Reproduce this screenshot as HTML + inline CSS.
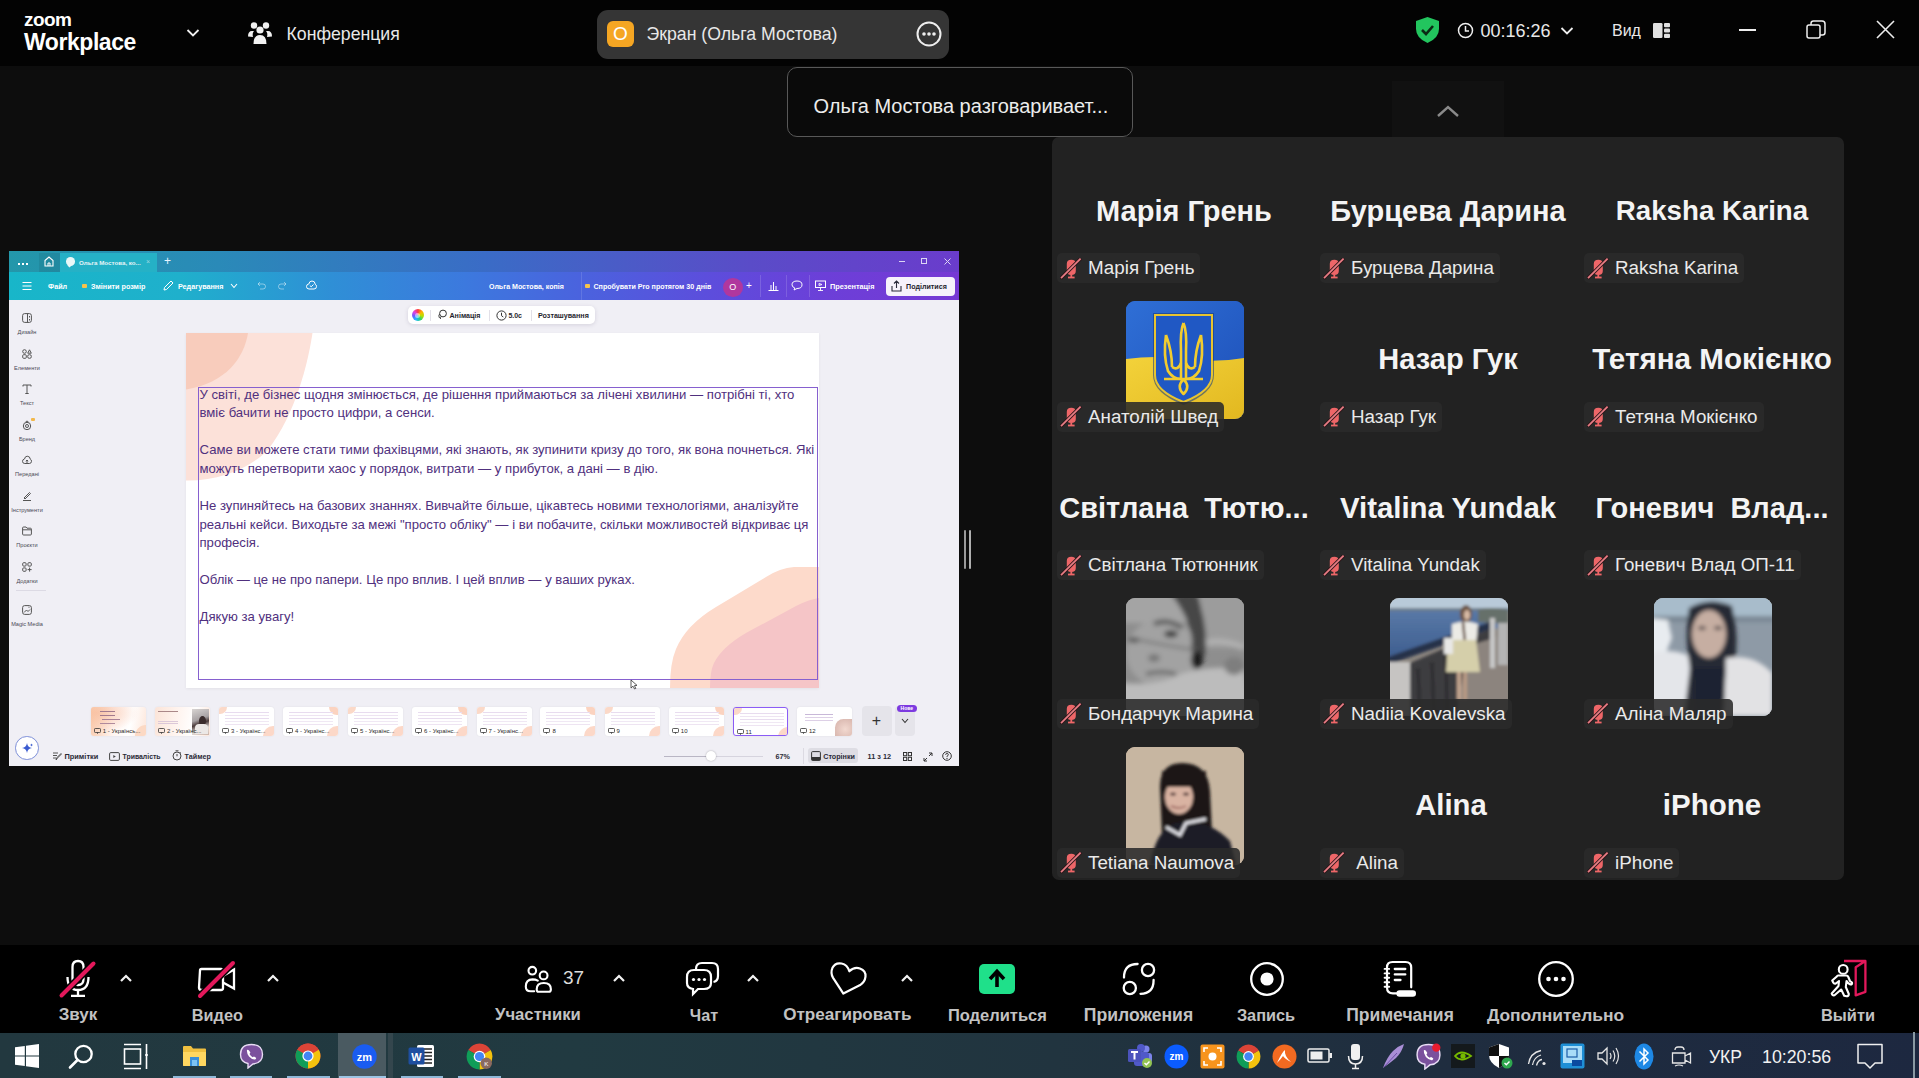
<!DOCTYPE html>
<html><head><meta charset="utf-8">
<style>
*{margin:0;padding:0;box-sizing:border-box}
html,body{width:1919px;height:1078px;overflow:hidden;background:#0d0d0d;font-family:"Liberation Sans",sans-serif;position:relative}
.a{position:absolute}
#top{left:0;top:0;width:1919px;height:66px;background:#030303}
.wt{color:#e8e8e8}
#main{left:0;top:66px;width:1919px;height:879px;background:#0d0d0d}
#panel{left:1052px;top:137px;width:792px;height:743px;background:#222;border-radius:7px}
#tb{left:0;top:945px;width:1919px;height:88px;background:#000}
#task{left:0;top:1033px;width:1919px;height:45px;background:linear-gradient(90deg,#22383f 0%,#213a41 30%,#21343f 55%,#1f2d3f 75%,#1d2840 100%)}
.lbl{color:#c2c2c2;font-weight:bold;font-size:17px;line-height:20px;white-space:nowrap;text-align:center}
.big{color:#f4f4f4;font-weight:bold;font-size:29px;white-space:nowrap;text-align:center;width:264px}
.tag{height:30px;background:rgba(42,42,42,0.88);border-radius:5px;color:#eaeaea;font-size:18.8px;line-height:29px;padding-left:31px;padding-right:6px;white-space:nowrap}
.tag svg{position:absolute;left:3px;top:4px}

.av{width:118px;height:118px;border-radius:9px;overflow:hidden}
.av-flag{background:linear-gradient(180deg,#2a62c9 0%,#1f56c0 52%,#f0cb2a 52%,#e9c22a 100%)}
.av-p1{background:radial-gradient(ellipse at 45% 60%,#c8c8c8 0%,#9a9a9a 45%,#5a5a5a 100%)}
.av-p2{background:linear-gradient(180deg,#b6c6d6 0%,#9fb4c8 12%,#2f4d74 14%,#3b5c86 45%,#6a7990 70%,#9a8f86 100%)}
.av-p3{background:radial-gradient(ellipse at 50% 40%,#c9b7ac 0%,#e6e6e8 60%,#f4f4f6 100%)}
.av-p4{background:radial-gradient(ellipse at 50% 55%,#3a2c2a 0%,#2a2222 30%,#c8b29c 55%,#d7c2ac 100%)}

.cvt{color:#fff;font-weight:bold;font-size:7.2px;line-height:10px;white-space:nowrap}
.sb{left:0;width:36px;text-align:center;font-size:5.6px;color:#4a4a56;line-height:8px;white-space:nowrap}
.sb svg{display:block;margin:0 auto 5px auto}
</style></head><body>
<div class="a" id="top"></div>
<div class="a" id="main"></div>
<div class="a" id="panel"></div>

<!-- TOP BAR -->
<div class="a wt" style="left:24px;top:10.4px;font-size:19px;font-weight:bold;letter-spacing:-0.6px;line-height:20px;color:#fff">zoom</div>
<div class="a wt" style="left:24px;top:28.9px;font-size:23px;font-weight:bold;line-height:26px;color:#fff;letter-spacing:-0.45px">Workplace</div>
<svg class="a" style="left:186px;top:28px" width="14" height="10" viewBox="0 0 14 10"><path d="M1.5 2 L7 7.5 L12.5 2" stroke="#f0f0f0" stroke-width="1.8" fill="none"/></svg>
<svg class="a" style="left:247px;top:21px" width="26" height="24" viewBox="0 0 26 24"><circle cx="7" cy="4.5" r="3.2" fill="#f2f2f2"/><circle cx="19" cy="4.5" r="3.2" fill="#f2f2f2"/><circle cx="13" cy="9" r="3.6" fill="#f2f2f2"/><path d="M1 15.5 Q1 10 5 10 L7 10 Q5 12 6 16 Z" fill="#f2f2f2"/><path d="M25 15.5 Q25 10 21 10 L19 10 Q21 12 20 16 Z" fill="#f2f2f2"/><path d="M6.5 23 Q6.5 14 13 14 Q19.5 14 19.5 23 Z" fill="#f2f2f2"/></svg>
<div class="a wt" style="left:286.5px;top:24px;font-size:17.7px;line-height:20px">Конференция</div>

<div class="a" style="left:597px;top:10px;width:352px;height:49px;background:#353535;border-radius:11px"></div>
<div class="a" style="left:607px;top:21px;width:27px;height:26px;background:#f5a623;border-radius:6px;color:#fff;font-size:19px;line-height:26px;text-align:center">O</div>
<div class="a wt" style="left:646.5px;top:24px;font-size:17.7px;line-height:20px">Экран (Ольга Мостова)</div>
<svg class="a" style="left:915px;top:20px" width="28" height="28" viewBox="0 0 28 28"><circle cx="14" cy="14" r="11.5" stroke="#eee" stroke-width="2" fill="none"/><circle cx="9" cy="14" r="1.8" fill="#eee"/><circle cx="14" cy="14" r="1.8" fill="#eee"/><circle cx="19" cy="14" r="1.8" fill="#eee"/></svg>

<div class="a" style="left:787px;top:67px;width:346px;height:70px;background:#0a0a0a;border:1.5px solid #585858;border-radius:10px"></div>
<div class="a wt" style="left:813.5px;top:95px;font-size:20px;line-height:22px;color:#ececec">Ольга Мостова разговаривает...</div>

<svg class="a" style="left:1414px;top:16px" width="27" height="28" viewBox="0 0 27 28"><path d="M13.5 1 L25 5 L25 13 Q25 22 13.5 27 Q2 22 2 13 L2 5 Z" fill="#22c55e"/><path d="M8 14 L12 18 L19 10" stroke="#0b2a14" stroke-width="2.6" fill="none"/></svg>
<svg class="a" style="left:1457px;top:22px" width="17" height="17" viewBox="0 0 17 17"><circle cx="8.5" cy="8.5" r="7" stroke="#eee" stroke-width="1.5" fill="none"/><path d="M8.5 4 L8.5 9 L12 9" stroke="#eee" stroke-width="1.5" fill="none"/></svg>
<div class="a wt" style="left:1480.5px;top:21px;font-size:18px;line-height:20px">00:16:26</div>
<svg class="a" style="left:1560px;top:26px" width="14" height="10" viewBox="0 0 14 10"><path d="M1.5 2 L7 7.5 L12.5 2" stroke="#eee" stroke-width="1.8" fill="none"/></svg>
<div class="a wt" style="left:1612px;top:21px;font-size:16px;line-height:20px">Вид</div>
<svg class="a" style="left:1653px;top:22.5px" width="17" height="15" viewBox="0 0 17 15"><rect x="0" y="0" width="9.5" height="15" rx="1.3" fill="#e0e0e0"/><rect x="11" y="0" width="6" height="4.3" rx="1" fill="#e0e0e0"/><rect x="11" y="5.4" width="6" height="4.2" rx="1" fill="#e0e0e0"/><rect x="11" y="10.7" width="6" height="4.3" rx="1" fill="#e0e0e0"/></svg>
<div class="a" style="left:1739px;top:29px;width:17px;height:1.5px;background:#eee"></div>
<svg class="a" style="left:1806px;top:20px" width="20" height="20" viewBox="0 0 20 20"><rect x="1" y="5" width="13" height="13" rx="2" stroke="#eee" stroke-width="1.5" fill="none"/><path d="M5 5 L5 3.5 Q5 1 7.5 1 L16 1 Q19 1 19 4 L19 12.5 Q19 15 16.5 15 L14 15" stroke="#eee" stroke-width="1.5" fill="none"/></svg>
<svg class="a" style="left:1876px;top:20px" width="19" height="19" viewBox="0 0 19 19"><path d="M1 1 L18 18 M18 1 L1 18" stroke="#eee" stroke-width="1.6"/></svg>
<div class="a" style="left:1392px;top:81px;width:112px;height:56px;background:#111111"></div>
<svg class="a" style="left:1436px;top:103px" width="24" height="16" viewBox="0 0 24 16"><path d="M2 13 L12 4 L22 13" stroke="#8a8a8a" stroke-width="2.4" fill="none"/></svg>

<div class="a" id="tb"></div>
<div class="a" id="task"></div>
<div class="a" style="left:964px;top:530px;width:2px;height:39px;background:#9a9a9a;border-radius:1px"></div><div class="a" style="left:968.6px;top:530px;width:2px;height:39px;background:#b0b0b0;border-radius:1px"></div>
<!-- CANVA -->
<div class="a" id="cv" style="left:9px;top:251px;width:950px;height:515px;background:#f0eff5;overflow:hidden">
 <div class="a" style="left:0;top:0;width:950px;height:21px;background:linear-gradient(90deg,#2397aa 0%,#2a8ab8 22%,#3a6cc6 50%,#5a4cc8 78%,#6a3ccc 100%)"></div>
 
 <div class="a" style="left:30px;top:2px;width:21px;height:19px;background:rgba(0,0,0,0.07)"></div>
 <div class="a" style="left:51px;top:2px;width:97px;height:19px;background:#25b1c6"></div>
 <div class="a" style="left:9px;top:11.5px;width:2px;height:2px;background:#fff;box-shadow:4px 0 #fff,8px 0 #fff"></div>
 <svg class="a" style="left:35px;top:5px" width="10" height="11" viewBox="0 0 10 11"><path d="M1 4.5 L5 1 L9 4.5 L9 10 L1 10 Z" stroke="#fff" stroke-width="1.1" fill="none"/><path d="M4 10 L4 7 L6 7 L6 10" stroke="#fff" stroke-width="1" fill="none"/></svg>
 <div class="a" style="left:57px;top:6px;width:9px;height:8.5px;border-radius:50%;background:#eaf8f8"></div><div class="a" style="left:59px;top:13px;width:3px;height:3px;background:#eaf8f8;transform:rotate(45deg)"></div>
 <div class="a" style="left:70px;top:6px;font-size:6.2px;font-weight:bold;color:#e6f4f7;line-height:11px;white-space:nowrap">Ольга Мостова, ко...</div>
 <div class="a" style="left:137px;top:5px;font-size:7px;color:#9fd6e0;line-height:11px">×</div>
 <div class="a" style="left:155px;top:2px;font-size:12px;color:#e8f4ff;line-height:16px">+</div>
 <div class="a" style="left:890px;top:10px;width:6px;height:1px;background:#dcd6f4"></div>
 <div class="a" style="left:912px;top:7px;width:6px;height:6px;border:1px solid #dcd6f4"></div>
 <svg class="a" style="left:935px;top:7px" width="7" height="7" viewBox="0 0 7 7"><path d="M0.5 0.5 L6.5 6.5 M6.5 0.5 L0.5 6.5" stroke="#dcd6f4" stroke-width="1"/></svg>

 <div class="a" style="left:0;top:21px;width:950px;height:28px;background:linear-gradient(90deg,#18b6c9 0%,#1fb0cc 18%,#2f8fd6 34%,#3c79de 48%,#4a63de 60%,#5d4ddc 74%,#6c3fd8 86%,#7639d4 100%)"></div>
 <svg class="a" style="left:13px;top:30px" width="10" height="10" viewBox="0 0 10 10"><path d="M0.5 1.5 H9.5 M0.5 5 H9.5 M0.5 8.5 H9.5" stroke="#fff" stroke-width="1.1"/></svg>
 <div class="a cvt" style="left:39px;top:31px">Файл</div>
 <div class="a" style="left:73px;top:33px;width:5px;height:4px;background:#f6c34a;border-radius:1px"></div>
 <div class="a cvt" style="left:82px;top:31px">Змінити розмір</div>
 <svg class="a" style="left:154px;top:29px" width="11" height="11" viewBox="0 0 11 11"><path d="M1 10 L1.5 7.5 L8 1 L10 3 L3.5 9.5 Z" stroke="#fff" stroke-width="1" fill="none"/></svg>
 <div class="a cvt" style="left:169px;top:31px">Редагування</div>
 <svg class="a" style="left:221px;top:32px" width="8" height="6" viewBox="0 0 8 6"><path d="M1 1 L4 4.5 L7 1" stroke="#fff" stroke-width="1.1" fill="none"/></svg>
 <svg class="a" style="left:247px;top:30px" width="10" height="9" viewBox="0 0 10 9"><path d="M2 3 H7 Q9.5 3 9.5 5.5 Q9.5 8 7 8 H4 M2 3 L4 1 M2 3 L4 5" stroke="rgba(255,255,255,0.45)" stroke-width="1" fill="none"/></svg>
 <svg class="a" style="left:269px;top:30px" width="10" height="9" viewBox="0 0 10 9"><path d="M8 3 H3 Q0.5 3 0.5 5.5 Q0.5 8 3 8 H6 M8 3 L6 1 M8 3 L6 5" stroke="rgba(255,255,255,0.45)" stroke-width="1" fill="none"/></svg>
 <svg class="a" style="left:297px;top:29px" width="11" height="10" viewBox="0 0 11 10"><path d="M3 9 Q0.5 9 0.5 6.5 Q0.5 4.3 2.8 4 Q3.3 1 6 1 Q9 1 9.2 4.2 Q10.5 4.8 10.5 6.5 Q10.5 9 8 9 Z" stroke="#fff" stroke-width="1" fill="none"/><path d="M3.8 5.5 L5.2 6.8 L7.5 4.5" stroke="#fff" stroke-width="1" fill="none"/></svg>
 <div class="a cvt" style="left:480px;top:31px;font-size:7.05px">Ольга Мостова, копія</div>
 <div class="a" style="left:572px;top:21px;width:1px;height:28px;background:rgba(255,255,255,0.12)"></div>
 <div class="a" style="left:576px;top:33px;width:5px;height:4px;background:#f6c34a;border-radius:1px"></div>
 <div class="a cvt" style="left:584.5px;top:31px;font-size:7.1px">Спробувати Pro протягом 30 днів</div>
 <div class="a" style="left:714px;top:26.5px;width:19.5px;height:19px;border-radius:50%;background:#b0379e;color:#fff;font-size:9px;text-align:center;line-height:19px">O</div>
 <div class="a" style="left:737px;top:28px;font-size:10px;color:#fff;line-height:14px">+</div>
 <div class="a" style="left:751px;top:24px;width:1px;height:22px;background:rgba(255,255,255,0.15)"></div>
 <svg class="a" style="left:759px;top:29px" width="11" height="11" viewBox="0 0 11 11"><path d="M0.5 10.5 H10.5 M3 10 V5 M5.5 10 V2 M8 10 V6" stroke="#fff" stroke-width="1" fill="none"/></svg>
 <div class="a" style="left:777px;top:24px;width:1px;height:22px;background:rgba(255,255,255,0.15)"></div>
 <svg class="a" style="left:782px;top:29px" width="12" height="11" viewBox="0 0 12 11"><path d="M6 1 Q11 1 11 4.8 Q11 8.5 6 8.5 L3 10 L3.8 8 Q1 7 1 4.8 Q1 1 6 1 Z" stroke="#fff" stroke-width="1" fill="none"/></svg>
 <div class="a" style="left:800px;top:24px;width:1px;height:22px;background:rgba(255,255,255,0.15)"></div>
 <svg class="a" style="left:806px;top:29px" width="11" height="11" viewBox="0 0 11 11"><rect x="0.5" y="1" width="10" height="6.5" stroke="#fff" stroke-width="1" fill="none"/><path d="M5.5 7.5 V10.5 M3 10.5 H8 M4 3.5 L7 4.5 L4 5.5 Z" stroke="#fff" stroke-width="0.9" fill="none"/></svg>
 <div class="a cvt" style="left:821px;top:31px;font-size:7.35px">Презентація</div>
 <div class="a" style="left:877px;top:26px;width:68.5px;height:19px;border-radius:4px;background:#f6f2fb"></div>
 <svg class="a" style="left:882px;top:29px" width="11" height="12" viewBox="0 0 11 12"><path d="M5.5 8 V1 M3 3.5 L5.5 1 L8 3.5 M1 6 V11 H10 V6" stroke="#2a2a3a" stroke-width="1.1" fill="none"/></svg>
 <div class="a cvt" style="left:897px;top:31px;color:#1f1f2e;font-size:7.15px">Поділитися</div>

 <!-- sidebar -->
 <div class="a sb" style="top:62px"><svg width="10" height="10" viewBox="0 0 10 10"><rect x="0.6" y="0.6" width="8.8" height="8.8" rx="2" stroke="#555" stroke-width="1" fill="none"/><path d="M5.5 0.6 V9.4 M7.5 3 V4.5 M7.5 6 V7.5" stroke="#555" stroke-width="1"/></svg><div>Дизайн</div></div>
 <div class="a sb" style="top:97.5px"><svg width="10" height="10" viewBox="0 0 10 10"><circle cx="2.5" cy="2.5" r="1.8" stroke="#555" stroke-width="1" fill="none"/><path d="M7.5 0.8 L9.3 4.2 H5.7 Z" stroke="#555" stroke-width="1" fill="none"/><rect x="0.7" y="5.7" width="3.6" height="3.6" rx="1" stroke="#555" stroke-width="1" fill="none"/><rect x="5.7" y="5.7" width="3.6" height="3.6" rx="1.5" stroke="#555" stroke-width="1" fill="none"/></svg><div>Елементи</div></div>
 <div class="a sb" style="top:133px"><svg width="10" height="10" viewBox="0 0 10 10"><path d="M1 2.5 V1 H9 V2.5 M5 1 V9.5 M3.3 9.5 H6.7" stroke="#555" stroke-width="1" fill="none"/></svg><div>Текст</div></div>
 <div class="a sb" style="top:168.5px"><svg width="10" height="10" viewBox="0 0 10 10"><circle cx="5" cy="6" r="3.7" stroke="#555" stroke-width="1" fill="none"/><circle cx="5" cy="6" r="1.5" stroke="#555" stroke-width="1" fill="none"/><path d="M3.5 2 Q5 0 6.5 2" stroke="#555" stroke-width="1" fill="none"/></svg><div>Бренд</div></div>
 <div class="a" style="left:22px;top:167px;width:4px;height:3px;background:#f2b84b;border-radius:1px"></div>
 <div class="a sb" style="top:204px"><svg width="10" height="10" viewBox="0 0 10 10"><path d="M2.8 8.5 Q0.5 8.5 0.5 6.3 Q0.5 4.3 2.5 4 Q3 1.2 5.2 1.2 Q8 1.2 8.3 4.2 Q9.5 4.6 9.5 6.3 Q9.5 8.5 7.3 8.5 Z M5 8 V5 M3.8 6.2 L5 5 L6.2 6.2" stroke="#555" stroke-width="1" fill="none"/></svg><div>Передані</div></div>
 <div class="a sb" style="top:239.5px"><svg width="10" height="10" viewBox="0 0 10 10"><path d="M2 7 L7.5 1.5 L8.5 2.5 L3 8 Z M1 9.5 H9" stroke="#555" stroke-width="1" fill="none"/></svg><div>Інструменти</div></div>
 <div class="a sb" style="top:275px"><svg width="10" height="10" viewBox="0 0 10 10"><path d="M0.6 2 Q0.6 1 1.6 1 H4 L5 2.2 H8.4 Q9.4 2.2 9.4 3.2 V8 Q9.4 9 8.4 9 H1.6 Q0.6 9 0.6 8 Z M0.6 3.8 H9.4" stroke="#555" stroke-width="1" fill="none"/></svg><div>Проєкти</div></div>
 <div class="a sb" style="top:310.5px"><svg width="10" height="10" viewBox="0 0 10 10"><rect x="0.7" y="0.7" width="3.4" height="3.4" rx="1" stroke="#555" stroke-width="1" fill="none"/><rect x="5.9" y="0.7" width="3.4" height="3.4" rx="1" stroke="#555" stroke-width="1" fill="none"/><rect x="0.7" y="5.9" width="3.4" height="3.4" rx="1" stroke="#555" stroke-width="1" fill="none"/><path d="M7.6 5.6 V9.6 M5.6 7.6 H9.6" stroke="#555" stroke-width="1"/></svg><div>Додатки</div></div>
 <div class="a" style="left:7px;top:339px;width:30px;height:1px;background:#dcdae4"></div>
 <div class="a sb" style="top:354px"><svg width="10" height="10" viewBox="0 0 10 10"><rect x="0.6" y="0.6" width="8.8" height="8.8" rx="2" stroke="#555" stroke-width="1" fill="none"/><path d="M2 7.5 L4.5 5 L6 6.5 L8 4.5 M6.5 2.2 L7.5 2.2" stroke="#555" stroke-width="1" fill="none"/></svg><div>Magic Media</div></div>

 <!-- floating toolbar -->
 <div class="a" style="left:399px;top:54.7px;width:187px;height:18.5px;background:#fff;border-radius:5px;box-shadow:0 1px 4px rgba(60,50,90,0.15)"></div>
 <div class="a" style="left:402.5px;top:58px;width:12px;height:12px;border-radius:50%;background:conic-gradient(#ff3c3c,#ffb400,#b6e000,#20d080,#20b8ff,#6a5cff,#e040e0,#ff3c3c)"></div>
 <div class="a" style="left:406px;top:61.5px;width:5px;height:5px;border-radius:50%;background:rgba(255,255,255,0.5)"></div>
 <div class="a" style="left:420.5px;top:58.5px;width:1px;height:11px;background:#e2e0e8"></div>
 <svg class="a" style="left:428px;top:58px" width="10" height="11" viewBox="0 0 10 11"><circle cx="6" cy="4.5" r="3.4" stroke="#333" stroke-width="1" fill="none"/><path d="M2.6 5 Q1 6.5 2.5 9 M4 7.8 Q3 8.8 3.5 10" stroke="#333" stroke-width="0.9" fill="none"/></svg>
 <div class="a cvt" style="left:440.5px;top:59.5px;color:#1f1f2e;font-size:7.1px">Анімація</div>
 <div class="a" style="left:479.5px;top:58.5px;width:1px;height:11px;background:#e2e0e8"></div>
 <svg class="a" style="left:486.5px;top:58.5px" width="11" height="11" viewBox="0 0 11 11"><circle cx="5.5" cy="5.5" r="4.6" stroke="#333" stroke-width="1" fill="none"/><path d="M5.5 2.7 V5.7 L7.3 7" stroke="#333" stroke-width="1" fill="none"/></svg>
 <div class="a cvt" style="left:499.4px;top:59.5px;color:#1f1f2e;font-size:7px">5.0с</div>
 <div class="a" style="left:521.5px;top:58.5px;width:1px;height:11px;background:#e2e0e8"></div>
 <div class="a cvt" style="left:529px;top:59.5px;color:#1f1f2e;font-size:7.15px">Розташування</div>

 <!-- slide -->
 <div class="a" style="left:176.5px;top:81.5px;width:633px;height:355px;background:#fff;overflow:hidden;box-shadow:0 1px 3px rgba(0,0,0,0.06)">
  <svg class="a" style="left:0;top:0" width="633" height="355" viewBox="0 0 633 355">
   <path d="M0 0 L126.5 0 C122 30 110 80 81.7 117.2 C65 134 35 148 0 147.5 Z" fill="#fce1d9"/>
   <path d="M0 0 L62 0 C58 25 40 50 0 56.5 Z" fill="#f8ccbc"/>
   <path d="M608 234 Q616 234 633 234 L633 355 L484 355 Q484 330 490 316 Q500 292 530 274 Q560 256 580 244 Q594 235 608 234 Z" fill="#fddacb"/>
   <path d="M633 265 L633 355 L524 355 Q524 338 528 330 Q536 314 560 300 Q590 284 610 273 Q624 266 633 265 Z" fill="#f5c5c7"/>
  </svg>
 </div>
 <div class="a" style="left:189.4px;top:136.4px;width:620px;height:293px;border:1.3px solid #8660cf"></div>
 <div class="a" id="stxt" style="left:190.5px;top:134.8px;width:624px;font-size:13.15px;line-height:18.53px;color:#50307e;white-space:nowrap">У світі, де бізнес щодня змінюється, де рішення приймаються за лічені хвилини — потрібні ті, хто<br>вміє бачити не просто цифри, а сенси.<br><br>Саме ви можете стати тими фахівцями, які знають, як зупинити кризу до того, як вона почнеться. Які<br>можуть перетворити хаос у порядок, витрати — у прибуток, а дані — в дію.<br><br>Не зупиняйтесь на базових знаннях. Вивчайте більше, цікавтесь новими технологіями, аналізуйте<br>реальні кейси. Виходьте за межі "просто обліку" — і ви побачите, скільки можливостей відкриває ця<br>професія.<br><br>Облік — це не про папери. Це про вплив. І цей вплив — у ваших руках.<br><br>Дякую за увагу!</div>
 <svg class="a" style="left:621px;top:428px" width="8" height="11" viewBox="0 0 8 11"><path d="M1 1 L1 9 L3 7.2 L4.6 10 L5.8 9.4 L4.4 6.6 L7 6.4 Z" fill="#fff" stroke="#333" stroke-width="0.8"/></svg>

 <!-- thumbnails -->
 <div class="a" style="left:81.8px;top:455.7px;width:55px;height:29px;border-radius:3px;overflow:hidden;background:linear-gradient(100deg,#fbe4d8 0%,#fff4ef 40%,#fff 70%,#fde6da 100%);box-shadow:0 0 2px rgba(0,0,0,0.08);"><div class="a" style="left:0;top:0;width:55px;height:29px;background:radial-gradient(ellipse at 10% 20%,#f9c9b2 0%,rgba(255,255,255,0) 60%)"></div><div class="a" style="left:0;top:0;width:55px;height:29px;background:linear-gradient(90deg,rgba(250,190,150,0.55),rgba(255,255,255,0) 40%)"></div><div class="a" style="left:9px;top:4.5px;width:15px;height:1.3px;background:#a27a8e;box-shadow:0 4px #a27a8e,5px 8px #a88096,0 12px #b08a9c"></div><div class="a" style="left:11px;top:12.5px;width:18px;height:1.3px;background:#a88096"></div><div class="a" style="left:44px;top:18px;width:11px;height:11px;border-radius:11px 0 0 0;background:#fcd9c4"></div><svg class="a" style="left:3px;top:21px" width="7" height="6" viewBox="0 0 7 6"><rect x="0.5" y="0.5" width="6" height="4" rx="0.8" stroke="#333" stroke-width="0.8" fill="none"/><path d="M3.5 4.5 V5.8" stroke="#333" stroke-width="0.8"/></svg><div class="a" style="left:12px;top:20px;font-size:6px;line-height:8px;color:#2a2a2a;white-space:nowrap">1 - Українсь...</div></div>
 <div class="a" style="left:146.0px;top:455.7px;width:55px;height:29px;border-radius:3px;overflow:hidden;background:linear-gradient(100deg,#fbe4d8 0%,#fff4ef 40%,#fff 70%,#fde6da 100%);box-shadow:0 0 2px rgba(0,0,0,0.08);"><div class="a" style="left:37px;top:2px;width:17px;height:26px;background:linear-gradient(160deg,#d8d4d2 0%,#a8a2a4 40%,#4a3a3a 55%,#e2dcd8 75%,#cbb4a8 100%)"></div><div class="a" style="left:44px;top:9px;width:7px;height:10px;border-radius:50%;background:#3a2c2c"></div><div class="a" style="left:40px;top:17px;width:13px;height:10px;border-radius:4px 4px 0 0;background:#ece8e6"></div><div class="a" style="left:3px;top:4px;width:20px;height:1px;background:#a88;box-shadow:0 10px #dcc8d8,0 12px #dcc8d8"></div><svg class="a" style="left:3px;top:21px" width="7" height="6" viewBox="0 0 7 6"><rect x="0.5" y="0.5" width="6" height="4" rx="0.8" stroke="#333" stroke-width="0.8" fill="none"/><path d="M3.5 4.5 V5.8" stroke="#333" stroke-width="0.8"/></svg><div class="a" style="left:12px;top:20px;font-size:6px;line-height:8px;color:#2a2a2a;white-space:nowrap">2 - Українс...</div></div>
 <div class="a" style="left:210.0px;top:455.7px;width:55px;height:29px;border-radius:3px;overflow:hidden;background:#fff;box-shadow:0 0 2px rgba(0,0,0,0.08);"><div class="a" style="left:0;top:0;width:8px;height:7px;border-radius:0 0 8px 0;background:#fbd9c8"></div><div class="a" style="left:6px;top:5px;width:44px;height:1.5px;background:#e8dcef;box-shadow:0 3px #eee4f2,0 6px #e8dcef,0 9px #f0e8f4,0 12px #eee4f2"></div><div class="a" style="left:44px;top:19px;width:11px;height:10px;border-radius:10px 0 0 0;background:#fcd8c8"></div><svg class="a" style="left:3px;top:21px" width="7" height="6" viewBox="0 0 7 6"><rect x="0.5" y="0.5" width="6" height="4" rx="0.8" stroke="#333" stroke-width="0.8" fill="none"/><path d="M3.5 4.5 V5.8" stroke="#333" stroke-width="0.8"/></svg><div class="a" style="left:12px;top:20px;font-size:6px;line-height:8px;color:#2a2a2a;white-space:nowrap">3 - Українс...</div></div>
 <div class="a" style="left:274.0px;top:455.7px;width:55px;height:29px;border-radius:3px;overflow:hidden;background:#fff;box-shadow:0 0 2px rgba(0,0,0,0.08);"><div class="a" style="left:46px;top:0;width:9px;height:8px;border-radius:0 0 0 8px;background:#fbd3c0"></div><div class="a" style="left:6px;top:5px;width:44px;height:1.5px;background:#e8dcef;box-shadow:0 3px #eee4f2,0 6px #e8dcef,0 9px #f0e8f4,0 12px #eee4f2"></div><div class="a" style="left:44px;top:19px;width:11px;height:10px;border-radius:10px 0 0 0;background:#fcd8c8"></div><svg class="a" style="left:3px;top:21px" width="7" height="6" viewBox="0 0 7 6"><rect x="0.5" y="0.5" width="6" height="4" rx="0.8" stroke="#333" stroke-width="0.8" fill="none"/><path d="M3.5 4.5 V5.8" stroke="#333" stroke-width="0.8"/></svg><div class="a" style="left:12px;top:20px;font-size:6px;line-height:8px;color:#2a2a2a;white-space:nowrap">4 - Українс...</div></div>
 <div class="a" style="left:339.0px;top:455.7px;width:55px;height:29px;border-radius:3px;overflow:hidden;background:#fff;box-shadow:0 0 2px rgba(0,0,0,0.08);"><div class="a" style="left:0;top:0;width:8px;height:7px;border-radius:0 0 8px 0;background:#fbd9c8"></div><div class="a" style="left:6px;top:5px;width:44px;height:1.5px;background:#e8dcef;box-shadow:0 3px #eee4f2,0 6px #e8dcef,0 9px #f0e8f4,0 12px #eee4f2"></div><div class="a" style="left:44px;top:19px;width:11px;height:10px;border-radius:10px 0 0 0;background:#fcd8c8"></div><svg class="a" style="left:3px;top:21px" width="7" height="6" viewBox="0 0 7 6"><rect x="0.5" y="0.5" width="6" height="4" rx="0.8" stroke="#333" stroke-width="0.8" fill="none"/><path d="M3.5 4.5 V5.8" stroke="#333" stroke-width="0.8"/></svg><div class="a" style="left:12px;top:20px;font-size:6px;line-height:8px;color:#2a2a2a;white-space:nowrap">5 - Українс...</div></div>
 <div class="a" style="left:403.0px;top:455.7px;width:55px;height:29px;border-radius:3px;overflow:hidden;background:#fff;box-shadow:0 0 2px rgba(0,0,0,0.08);"><div class="a" style="left:46px;top:0;width:9px;height:8px;border-radius:0 0 0 8px;background:#fbd3c0"></div><div class="a" style="left:6px;top:5px;width:44px;height:1.5px;background:#e8dcef;box-shadow:0 3px #eee4f2,0 6px #e8dcef,0 9px #f0e8f4,0 12px #eee4f2"></div><div class="a" style="left:44px;top:19px;width:11px;height:10px;border-radius:10px 0 0 0;background:#fcd8c8"></div><svg class="a" style="left:3px;top:21px" width="7" height="6" viewBox="0 0 7 6"><rect x="0.5" y="0.5" width="6" height="4" rx="0.8" stroke="#333" stroke-width="0.8" fill="none"/><path d="M3.5 4.5 V5.8" stroke="#333" stroke-width="0.8"/></svg><div class="a" style="left:12px;top:20px;font-size:6px;line-height:8px;color:#2a2a2a;white-space:nowrap">6 - Українс...</div></div>
 <div class="a" style="left:467.5px;top:455.7px;width:55px;height:29px;border-radius:3px;overflow:hidden;background:#fff;box-shadow:0 0 2px rgba(0,0,0,0.08);"><div class="a" style="left:0;top:0;width:8px;height:7px;border-radius:0 0 8px 0;background:#fbd9c8"></div><div class="a" style="left:6px;top:5px;width:44px;height:1.5px;background:#e8dcef;box-shadow:0 3px #eee4f2,0 6px #e8dcef,0 9px #f0e8f4,0 12px #eee4f2"></div><div class="a" style="left:44px;top:19px;width:11px;height:10px;border-radius:10px 0 0 0;background:#fcd8c8"></div><svg class="a" style="left:3px;top:21px" width="7" height="6" viewBox="0 0 7 6"><rect x="0.5" y="0.5" width="6" height="4" rx="0.8" stroke="#333" stroke-width="0.8" fill="none"/><path d="M3.5 4.5 V5.8" stroke="#333" stroke-width="0.8"/></svg><div class="a" style="left:12px;top:20px;font-size:6px;line-height:8px;color:#2a2a2a;white-space:nowrap">7 - Українс...</div></div>
 <div class="a" style="left:531.4px;top:455.7px;width:55px;height:29px;border-radius:3px;overflow:hidden;background:#fff;box-shadow:0 0 2px rgba(0,0,0,0.08);"><div class="a" style="left:46px;top:0;width:9px;height:8px;border-radius:0 0 0 8px;background:#fbd3c0"></div><div class="a" style="left:6px;top:5px;width:44px;height:1.5px;background:#e8dcef;box-shadow:0 3px #eee4f2,0 6px #e8dcef,0 9px #f0e8f4,0 12px #eee4f2"></div><div class="a" style="left:44px;top:19px;width:11px;height:10px;border-radius:10px 0 0 0;background:#fcd8c8"></div><svg class="a" style="left:3px;top:21px" width="7" height="6" viewBox="0 0 7 6"><rect x="0.5" y="0.5" width="6" height="4" rx="0.8" stroke="#333" stroke-width="0.8" fill="none"/><path d="M3.5 4.5 V5.8" stroke="#333" stroke-width="0.8"/></svg><div class="a" style="left:12px;top:20px;font-size:6px;line-height:8px;color:#2a2a2a;white-space:nowrap">8</div></div>
 <div class="a" style="left:595.5px;top:455.7px;width:55px;height:29px;border-radius:3px;overflow:hidden;background:#fff;box-shadow:0 0 2px rgba(0,0,0,0.08);"><div class="a" style="left:0;top:0;width:8px;height:7px;border-radius:0 0 8px 0;background:#fbd9c8"></div><div class="a" style="left:6px;top:5px;width:44px;height:1.5px;background:#e8dcef;box-shadow:0 3px #eee4f2,0 6px #e8dcef,0 9px #f0e8f4,0 12px #eee4f2"></div><div class="a" style="left:44px;top:19px;width:11px;height:10px;border-radius:10px 0 0 0;background:#fcd8c8"></div><svg class="a" style="left:3px;top:21px" width="7" height="6" viewBox="0 0 7 6"><rect x="0.5" y="0.5" width="6" height="4" rx="0.8" stroke="#333" stroke-width="0.8" fill="none"/><path d="M3.5 4.5 V5.8" stroke="#333" stroke-width="0.8"/></svg><div class="a" style="left:12px;top:20px;font-size:6px;line-height:8px;color:#2a2a2a;white-space:nowrap">9</div></div>
 <div class="a" style="left:659.8px;top:455.7px;width:55px;height:29px;border-radius:3px;overflow:hidden;background:#fff;box-shadow:0 0 2px rgba(0,0,0,0.08);"><div class="a" style="left:46px;top:0;width:9px;height:8px;border-radius:0 0 0 8px;background:#fbd3c0"></div><div class="a" style="left:6px;top:5px;width:44px;height:1.5px;background:#e8dcef;box-shadow:0 3px #eee4f2,0 6px #e8dcef,0 9px #f0e8f4,0 12px #eee4f2"></div><div class="a" style="left:44px;top:19px;width:11px;height:10px;border-radius:10px 0 0 0;background:#fcd8c8"></div><svg class="a" style="left:3px;top:21px" width="7" height="6" viewBox="0 0 7 6"><rect x="0.5" y="0.5" width="6" height="4" rx="0.8" stroke="#333" stroke-width="0.8" fill="none"/><path d="M3.5 4.5 V5.8" stroke="#333" stroke-width="0.8"/></svg><div class="a" style="left:12px;top:20px;font-size:6px;line-height:8px;color:#2a2a2a;white-space:nowrap">10</div></div>
 <div class="a" style="left:723.6px;top:455.7px;width:55px;height:29px;border-radius:3px;overflow:hidden;background:#fff;box-shadow:0 0 2px rgba(0,0,0,0.08);border:1.3px solid #8b5cf6;"><div class="a" style="left:0;top:0;width:8px;height:7px;border-radius:0 0 8px 0;background:#fbd9c8"></div><div class="a" style="left:6px;top:5px;width:44px;height:1.5px;background:#e8dcef;box-shadow:0 3px #eee4f2,0 6px #e8dcef,0 9px #f0e8f4,0 12px #eee4f2"></div><div class="a" style="left:44px;top:19px;width:11px;height:10px;border-radius:10px 0 0 0;background:#fcd8c8"></div><svg class="a" style="left:3px;top:21px" width="7" height="6" viewBox="0 0 7 6"><rect x="0.5" y="0.5" width="6" height="4" rx="0.8" stroke="#333" stroke-width="0.8" fill="none"/><path d="M3.5 4.5 V5.8" stroke="#333" stroke-width="0.8"/></svg><div class="a" style="left:12px;top:20px;font-size:6px;line-height:8px;color:#2a2a2a;white-space:nowrap">11</div></div>
 <div class="a" style="left:788.0px;top:455.7px;width:55px;height:29px;border-radius:3px;overflow:hidden;background:#fff;box-shadow:0 0 2px rgba(0,0,0,0.08);"><div class="a" style="left:38px;top:12px;width:17px;height:17px;border-radius:50% 0 0 0;background:radial-gradient(circle at 60% 60%,#f2d9d0,#d4b0a8)"></div><div class="a" style="left:8px;top:7px;width:28px;height:1px;background:#c8b8d8;box-shadow:0 3px #ddd0e6,0 6px #ddd0e6"></div><svg class="a" style="left:3px;top:21px" width="7" height="6" viewBox="0 0 7 6"><rect x="0.5" y="0.5" width="6" height="4" rx="0.8" stroke="#333" stroke-width="0.8" fill="none"/><path d="M3.5 4.5 V5.8" stroke="#333" stroke-width="0.8"/></svg><div class="a" style="left:12px;top:20px;font-size:6px;line-height:8px;color:#2a2a2a;white-space:nowrap">12</div></div>
 <div class="a" style="left:852.5px;top:455px;width:30px;height:30px;border-radius:4px;background:#e5e4ea;color:#333;font-size:16px;line-height:30px;text-align:center">+</div>
 <div class="a" style="left:886px;top:455px;width:19.5px;height:30px;border-radius:4px;background:#e5e4ea"></div>
 <svg class="a" style="left:892px;top:467px" width="8" height="6" viewBox="0 0 8 6"><path d="M1 1 L4 4.5 L7 1" stroke="#333" stroke-width="1.1" fill="none"/></svg>
 <div class="a" style="left:887.7px;top:453.7px;width:20.3px;height:7.8px;border-radius:4px;background:#7d3ae0;color:#fff;font-size:5px;font-weight:bold;text-align:center;line-height:7.8px">Нове</div>

 <!-- bottom bar -->
 <div class="a" style="left:6px;top:485px;width:23.5px;height:23.5px;border-radius:50%;background:#fff;border:1.3px solid #7d8fd8"></div>
 <svg class="a" style="left:11.5px;top:490.5px" width="13" height="13" viewBox="0 0 13 13"><path d="M6 1 Q6.6 5.4 11 6 Q6.6 6.6 6 11 Q5.4 6.6 1 6 Q5.4 5.4 6 1 Z" fill="#3a5bd0"/><path d="M10.5 1.5 Q10.7 2.8 12 3 Q10.7 3.2 10.5 4.5 Q10.3 3.2 9 3 Q10.3 2.8 10.5 1.5 Z" fill="#3a5bd0"/></svg>
 <svg class="a" style="left:43px;top:500px" width="10" height="10" viewBox="0 0 10 10"><path d="M1 2 H6 M1 4.5 H5 M1 7 H4 M4 9 L5 6.5 L9 2.5 L9.5 3 L5.5 7 Z" stroke="#444" stroke-width="0.9" fill="none"/></svg>
 <div class="a cvt" style="left:55.5px;top:501px;color:#2a2a36;font-size:7.4px">Примітки</div>
 <svg class="a" style="left:100px;top:500.5px" width="11" height="9" viewBox="0 0 11 9"><rect x="0.6" y="0.6" width="9.8" height="7.8" rx="1.2" stroke="#444" stroke-width="1" fill="none"/><path d="M4.3 3 L6.8 4.5 L4.3 6 Z" fill="#444"/></svg>
 <div class="a cvt" style="left:113.5px;top:501px;color:#2a2a36;font-size:6.9px">Тривалість</div>
 <svg class="a" style="left:163px;top:499px" width="10" height="11" viewBox="0 0 10 11"><circle cx="5" cy="6" r="4" stroke="#444" stroke-width="1" fill="none"/><path d="M5 4 V6.3 M3.5 0.8 H6.5 M8 2.3 L8.8 3" stroke="#444" stroke-width="1" fill="none"/></svg>
 <div class="a cvt" style="left:175.5px;top:501px;color:#2a2a36;font-size:7.2px">Таймер</div>
 <div class="a" style="left:654.6px;top:504.5px;width:99px;height:1.4px;background:#d6d4de"></div>
 <div class="a" style="left:654.6px;top:504.5px;width:47px;height:1.4px;background:#b9b6c4"></div>
 <div class="a" style="left:697px;top:500px;width:10px;height:10px;border-radius:50%;background:#fff;box-shadow:0 0 2px rgba(0,0,0,0.3)"></div>
 <div class="a cvt" style="left:766.6px;top:501px;color:#2a2a36;font-size:7.2px">67%</div>
 <div class="a" style="left:793.5px;top:497px;width:1px;height:16px;background:#dcdae2"></div>
 <div class="a" style="left:798.6px;top:497px;width:50px;height:15px;border-radius:3px;background:#dedde4"></div>
 <svg class="a" style="left:802px;top:500px" width="10" height="10" viewBox="0 0 10 10"><rect x="0.6" y="0.6" width="8.8" height="8.8" rx="1" stroke="#333" stroke-width="1" fill="none"/><rect x="0.6" y="6" width="8.8" height="3.4" fill="#333"/></svg>
 <div class="a cvt" style="left:814.2px;top:501px;color:#2a2a36;font-size:7.2px">Сторінки</div>
 <div class="a cvt" style="left:858.5px;top:501px;color:#2a2a36;font-size:7.3px">11 з 12</div>
 <svg class="a" style="left:894px;top:501px" width="9" height="9" viewBox="0 0 9 9"><rect x="0.5" y="0.5" width="3.2" height="3.2" stroke="#333" stroke-width="1" fill="none"/><rect x="5.3" y="0.5" width="3.2" height="3.2" stroke="#333" stroke-width="1" fill="none"/><rect x="0.5" y="5.3" width="3.2" height="3.2" stroke="#333" stroke-width="1" fill="none"/><rect x="5.3" y="5.3" width="3.2" height="3.2" stroke="#333" stroke-width="1" fill="none"/></svg>
 <svg class="a" style="left:913.5px;top:500.5px" width="10" height="10" viewBox="0 0 10 10"><path d="M6 1 H9 V4 M9 1 L6 4 M4 9 H1 V6 M1 9 L4 6" stroke="#333" stroke-width="1" fill="none"/></svg>
 <svg class="a" style="left:933px;top:500px" width="10" height="10" viewBox="0 0 10 10"><circle cx="5" cy="5" r="4.3" stroke="#333" stroke-width="1" fill="none"/><path d="M3.6 3.8 Q3.6 2.5 5 2.5 Q6.4 2.5 6.4 3.7 Q6.4 4.6 5 5.2 V6" stroke="#333" stroke-width="0.9" fill="none"/><circle cx="5" cy="7.4" r="0.6" fill="#333"/></svg>
</div>

<!-- TOOLBAR -->
<svg class="a" style="left:56px;top:958px" width="42" height="42" viewBox="0 0 42 42">
 <path d="M16.5 9 Q16.5 3 22 3 Q27.5 3 27.5 9 L27.5 21 Q27.5 27 22 27 Q16.5 27 16.5 21 Z" stroke="#fff" stroke-width="2.3" fill="none"/>
 <path d="M11.5 19 Q11.5 32 22 32 Q32.5 32 32.5 19" stroke="#fff" stroke-width="2.3" fill="none"/>
 <path d="M22 32 V37.5 M15 37.8 H29" stroke="#fff" stroke-width="2.3" fill="none"/>
 <path d="M5 38 L38 5" stroke="#000" stroke-width="7"/>
 <path d="M5.5 37.5 L37.5 5.5" stroke="#e3185b" stroke-width="4" stroke-linecap="round"/>
</svg>
<svg class="a" style="left:195px;top:958px" width="44" height="42" viewBox="0 0 44 42">
 <path d="M5 12.5 Q5 11 6.5 11 L26 11 Q28 11 28 13 L28 30 Q28 32 26 32 L6.5 32 Q4 32 4 29.5 Z" stroke="#fff" stroke-width="2.3" fill="none"/>
 <path d="M28 18 L39 11.5 L39 30.5 L28 24.5" stroke="#fff" stroke-width="2.3" fill="none"/>
 <path d="M4.5 38.5 L38.5 4.5" stroke="#000" stroke-width="7"/>
 <path d="M5 38 L38 5" stroke="#e3185b" stroke-width="4" stroke-linecap="round"/>
</svg>
<svg class="a chev" style="left:119px;top:973px" width="14" height="10" viewBox="0 0 14 10"><path d="M2 8 L7 3 L12 8" stroke="#f2f2f2" stroke-width="2.2" fill="none"/></svg>
<svg class="a chev" style="left:266px;top:973px" width="14" height="10" viewBox="0 0 14 10"><path d="M2 8 L7 3 L12 8" stroke="#f2f2f2" stroke-width="2.2" fill="none"/></svg>
<svg class="a chev" style="left:611.5px;top:973px" width="14" height="10" viewBox="0 0 14 10"><path d="M2 8 L7 3 L12 8" stroke="#f2f2f2" stroke-width="2.2" fill="none"/></svg>
<svg class="a chev" style="left:746px;top:973px" width="14" height="10" viewBox="0 0 14 10"><path d="M2 8 L7 3 L12 8" stroke="#f2f2f2" stroke-width="2.2" fill="none"/></svg>
<svg class="a chev" style="left:899.5px;top:973px" width="14" height="10" viewBox="0 0 14 10"><path d="M2 8 L7 3 L12 8" stroke="#f2f2f2" stroke-width="2.2" fill="none"/></svg>

<svg class="a" style="left:522px;top:965px" width="32" height="29" viewBox="0 0 32 29">
 <circle cx="10.3" cy="5.7" r="3.8" stroke="#fff" stroke-width="2.1" fill="none"/>
 <circle cx="21.6" cy="10.4" r="3.9" stroke="#fff" stroke-width="2.1" fill="none"/>
 <path d="M15.8 15.6 Q13.5 14.4 10.5 14.4 Q3.8 14.6 3.8 21.5 Q3.8 26.3 8.5 26.3 L12.2 26.3" stroke="#fff" stroke-width="2.1" fill="none" stroke-linecap="round"/>
 <path d="M16.5 26.8 L26.8 26.8 Q28.9 26.8 28.9 24.2 Q28.9 18 21.8 18 Q14.7 18 14.7 24.2 Q14.7 26.8 16.5 26.8 Z" stroke="#fff" stroke-width="2.1" fill="none"/>
</svg>
<div class="a" style="left:563px;top:967px;font-size:19px;line-height:22px;color:#dcdcdc">37</div>
<svg class="a" style="left:684px;top:961px" width="37" height="36" viewBox="0 0 37 36">
 <path d="M12 8 Q12 2 18 2 L28 2 Q34 2 34 8 L34 15 Q34 20 29.5 21" stroke="#fff" stroke-width="2.2" fill="none"/>
 <path d="M3 16 Q3 9 10 9 L20 9 Q27 9 27 16 L27 22 Q27 28 20 28 L14 28 L9 33 L9 28 Q3 27 3 22 Z" stroke="#fff" stroke-width="2.2" fill="none"/>
 <circle cx="9.5" cy="18.5" r="1.6" fill="#fff"/><circle cx="15" cy="18.5" r="1.6" fill="#fff"/><circle cx="20.5" cy="18.5" r="1.6" fill="#fff"/>
</svg>
<svg class="a" style="left:827px;top:963px;transform:rotate(15deg)" width="40" height="34" viewBox="0 0 40 34">
 <path d="M20 31 L6 18.5 Q2 14.5 2.8 9 Q4 3 10.5 2.5 Q16.5 2.2 20 8 Q23.5 2.2 29.5 2.5 Q36 3 37 9 Q37.8 14.5 34 18.5 Z" stroke="#fff" stroke-width="2.2" fill="none" stroke-linejoin="round"/>
</svg>
<div class="a" style="left:979px;top:964px;width:36px;height:30px;border-radius:5px;background:#1fe08a"></div>
<svg class="a" style="left:987px;top:968px" width="20" height="22" viewBox="0 0 20 22"><path d="M10 19 V6" stroke="#000" stroke-width="3.6"/><path d="M3 11 L10 3.5 L17 11" stroke="#000" stroke-width="3.6" fill="none" stroke-linejoin="miter"/></svg>
<svg class="a" style="left:1120px;top:961px" width="37" height="36" viewBox="0 0 37 36">
 <circle cx="28" cy="9" r="6.1" stroke="#fff" stroke-width="2.3" fill="none"/>
 <circle cx="9.8" cy="27" r="6.1" stroke="#fff" stroke-width="2.3" fill="none"/>
 <path d="M4 16.5 Q4 3 17.6 3" stroke="#fff" stroke-width="2.3" fill="none" stroke-linecap="round"/>
 <path d="M33.6 19 Q33.6 32.8 20.5 32.8" stroke="#fff" stroke-width="2.3" fill="none" stroke-linecap="round"/>
</svg>
<svg class="a" style="left:1248px;top:961px" width="38" height="36" viewBox="0 0 38 36"><circle cx="19" cy="18" r="15.8" stroke="#fff" stroke-width="2.3" fill="none"/><circle cx="19" cy="18" r="6.6" fill="#fff"/></svg>
<svg class="a" style="left:1381px;top:959px" width="38" height="40" viewBox="0 0 38 40">
 <path d="M17.5 34.4 L11.9 34.4 Q6 34.4 6 28.5 L6 8.5 Q6 3 11.5 3 L24.5 3 Q30.2 3 30.2 8.5 L30.2 28.3" stroke="#fff" stroke-width="2.2" fill="none" stroke-linecap="round"/>
 <path d="M3.6 9.9 H8.2 M3.6 14.4 H8.2 M3.6 18.8 H8.2 M3.6 23.3 H8.2 M3.6 27.8 H8.2" stroke="#fff" stroke-width="1.9" stroke-linecap="round"/>
 <path d="M13.8 10 H24.3 M13.8 15.4 H24.3 M13.8 21 H19.5" stroke="#fff" stroke-width="2.3" stroke-linecap="round"/>
 <rect x="15.4" y="31.3" width="19.6" height="6.5" rx="3.2" fill="#fff"/>
</svg>
<svg class="a" style="left:1536px;top:959px" width="40" height="40" viewBox="0 0 40 40"><circle cx="20" cy="20" r="16.8" stroke="#fff" stroke-width="2.3" fill="none"/><circle cx="12.5" cy="20" r="2.3" fill="#fff"/><circle cx="20" cy="20" r="2.3" fill="#fff"/><circle cx="27.5" cy="20" r="2.3" fill="#fff"/></svg>
<svg class="a" style="left:1829px;top:958px" width="40" height="42" viewBox="0 0 40 42">
 <path d="M15 3 H36.4 V33.8 L26.7 37.4 V9.3 L36.4 3" stroke="#e3185b" stroke-width="2.3" fill="none" stroke-linejoin="round"/>
 <circle cx="14.2" cy="11.4" r="4.4" stroke="#fff" stroke-width="2.1" fill="none"/>
 <path d="M9 17.5 L17 17.5 Q19 17.5 19.5 19.5 L21 23 L23 24.5 Q23.5 26.5 21.5 26.5 L19 25 L17.5 23 L16.8 29 L19.8 36 Q19.8 38.3 17.5 38.3 L15.2 37.8 L12.2 31.5 L5.5 37.2 Q3.2 37.8 2.7 35.5 L9.5 28 L10 23 L6.8 25.5 Q5 26 4.2 24.5 L3.2 22.5 L7.8 18.5 Q8.3 17.5 9 17.5 Z" stroke="#fff" stroke-width="2.1" fill="none" stroke-linejoin="round"/>
</svg>

<div class="a lbl" style="left:28px;top:1005px;width:100px;font-size:17px">Звук</div>
<div class="a lbl" style="left:167.4px;top:1005px;width:100px;font-size:16.3px">Видео</div>
<div class="a lbl" style="left:487.9px;top:1005px;width:100px;font-size:16.7px">Участники</div>
<div class="a lbl" style="left:654px;top:1005px;width:100px;font-size:16.2px">Чат</div>
<div class="a lbl" style="left:767.3px;top:1005px;width:160px;font-size:17.1px">Отреагировать</div>
<div class="a lbl" style="left:917.4px;top:1005px;width:160px;font-size:16.5px">Поделиться</div>
<div class="a lbl" style="left:1058.5px;top:1005px;width:160px;font-size:17.6px">Приложения</div>
<div class="a lbl" style="left:1186px;top:1005px;width:160px;font-size:16.3px">Запись</div>
<div class="a lbl" style="left:1320px;top:1005px;width:160px;font-size:17.5px">Примечания</div>
<div class="a lbl" style="left:1475.5px;top:1005px;width:160px;font-size:17.4px">Дополнительно</div>
<div class="a lbl" style="left:1798px;top:1005px;width:100px;font-size:16.4px">Выйти</div>
<!-- /TOOLBAR -->

<!-- TASKBAR -->
<div class="a" style="left:338px;top:1033px;width:48px;height:45px;background:#4a5a61"></div><div class="a" style="left:387.5px;top:1033px;width:5.5px;height:45px;background:#34464d"></div>
<div class="a" style="left:173px;top:1076px;width:43px;height:2px;background:#8fb8d8"></div>
<div class="a" style="left:230px;top:1076px;width:42px;height:2px;background:#8fb8d8"></div>
<div class="a" style="left:287px;top:1076px;width:43px;height:2px;background:#8fb8d8"></div>
<div class="a" style="left:339px;top:1076px;width:47px;height:2px;background:#9cc4e4"></div>
<div class="a" style="left:401px;top:1076px;width:42px;height:2px;background:#8fb8d8"></div>
<div class="a" style="left:458px;top:1076px;width:43px;height:2px;background:#8fb8d8"></div>
<svg class="a" style="left:15px;top:1044px" width="24" height="24" viewBox="0 0 24 24"><path d="M0 3.3 L9.8 1.9 V11.4 H0 Z M11 1.7 L24 0 V11.4 H11 Z M0 12.6 H9.8 V22.1 L0 20.7 Z M11 12.6 H24 V24 L11 22.3 Z" fill="#fff"/></svg>
<svg class="a" style="left:68px;top:1043px" width="27" height="27" viewBox="0 0 27 27"><circle cx="15.5" cy="11" r="8.2" stroke="#fff" stroke-width="2.3" fill="none"/><path d="M9.5 17 L2 24.5" stroke="#fff" stroke-width="2.6" stroke-linecap="round"/></svg>
<svg class="a" style="left:122px;top:1043px" width="27" height="27" viewBox="0 0 27 27"><path d="M2 1.5 H19 M2 25.5 H19" stroke="#fff" stroke-width="1.6"/><rect x="2.5" y="6" width="16" height="15" stroke="#fff" stroke-width="1.6" fill="none"/><path d="M24.5 1 V26 M23 12 H26" stroke="#fff" stroke-width="1.6"/></svg>
<svg class="a" style="left:182px;top:1045px" width="25" height="22" viewBox="0 0 25 22"><path d="M1 2 Q1 1 2 1 L9 1 L11 3.5 L23 3.5 Q24 3.5 24 4.5 L24 20 Q24 21 23 21 L2 21 Q1 21 1 20 Z" fill="#f0c040"/><path d="M1 7 H24 V20 Q24 21 23 21 L2 21 Q1 21 1 20 Z" fill="#ffd760"/><rect x="8" y="12" width="9" height="9" fill="#3a8fd8"/><rect x="10" y="15" width="5" height="6" fill="#7dc4f4"/></svg>
<svg class="a" style="left:239px;top:1043px" width="25" height="26" viewBox="0 0 25 26"><path d="M12.5 1.5 Q23.5 1.5 23.5 11.5 Q23.5 20 14 21 L9 25 L9 20.5 Q1.5 19 1.5 11.5 Q1.5 1.5 12.5 1.5 Z" fill="#7b519d" stroke="#e8dcf4" stroke-width="1.4"/><path d="M8 7 Q7.5 10 10 13.5 Q13 16.8 16 16.5 Q17.5 16 17 14.8 L15 13.4 L13.6 14.3 Q11.5 13 10.5 11 L11.4 9.6 L10 7.5 Q9 6.5 8 7 Z" fill="#fff"/></svg>
<svg class="a" style="left:295px;top:1043px" width="26" height="26" viewBox="0 0 26 26"><circle cx="13" cy="13" r="12.5" fill="#db4437"/><path d="M13 13 L2.2 6.8 A12.5 12.5 0 0 1 23.8 6.8 Z" fill="#db4437"/><path d="M13 13 L23.8 6.8 A12.5 12.5 0 0 1 13 25.5 Z" fill="#f4c20d"/><path d="M13 13 L13 25.5 A12.5 12.5 0 0 1 2.2 6.8 Z" fill="#0f9d58"/><circle cx="13" cy="13" r="5.6" fill="#fff"/><circle cx="13" cy="13" r="4.4" fill="#4285f4"/></svg>
<svg class="a" style="left:351px;top:1042.5px" width="27" height="27" viewBox="0 0 27 27"><circle cx="13.5" cy="13.5" r="12.2" fill="#1a5cf0"/><text x="13.5" y="17.5" font-family="Liberation Sans" font-size="11" font-weight="bold" fill="#fff" text-anchor="middle">zm</text></svg>
<svg class="a" style="left:408px;top:1044px" width="27" height="24" viewBox="0 0 27 24"><rect x="9" y="1" width="17" height="22" rx="1.5" fill="#fff"/><path d="M16 5 H24 M16 8.5 H24 M16 12 H24 M16 15.5 H24 M16 19 H24" stroke="#222" stroke-width="1.6"/><rect x="0.5" y="3.5" width="16" height="17" rx="1.5" fill="#1e4fa0"/><text x="8.5" y="16.5" font-family="Liberation Sans" font-size="11" font-weight="bold" fill="#fff" text-anchor="middle">W</text></svg>
<svg class="a" style="left:466px;top:1043px" width="27" height="27" viewBox="0 0 26 26"><path d="M13 13 L2.2 6.8 A12.5 12.5 0 0 1 23.8 6.8 Z" fill="#db4437"/><path d="M13 13 L23.8 6.8 A12.5 12.5 0 0 1 13 25.5 Z" fill="#f4c20d"/><path d="M13 13 L13 25.5 A12.5 12.5 0 0 1 2.2 6.8 Z" fill="#0f9d58"/><circle cx="13" cy="13" r="5.6" fill="#fff"/><circle cx="13" cy="13" r="4.4" fill="#4285f4"/><circle cx="19.5" cy="19.5" r="5.5" fill="#8a6a60"/><text x="19.5" y="22" font-family="Liberation Sans" font-size="6" fill="#fff" text-anchor="middle">K</text></svg>

<svg class="a" style="left:1127px;top:1043px" width="26" height="26" viewBox="0 0 26 26"><circle cx="19" cy="6" r="3.5" fill="#7b83eb"/><rect x="14" y="10" width="11" height="10" rx="3" fill="#7b83eb"/><circle cx="14" cy="5" r="4" fill="#5059c9"/><rect x="7" y="9" width="15" height="14" rx="3" fill="#5059c9"/><rect x="1" y="6" width="13" height="13" rx="1.5" fill="#4b53bc"/><path d="M4 9 H11 M7.5 9 V16.5" stroke="#fff" stroke-width="2"/><circle cx="20" cy="20" r="5" fill="#92c353"/><path d="M17.5 20 L19.3 21.8 L22.5 18.5" stroke="#fff" stroke-width="1.4" fill="none"/></svg>
<svg class="a" style="left:1164px;top:1044px" width="25" height="25" viewBox="0 0 25 25"><circle cx="12.5" cy="12.5" r="12" fill="#0b5cff"/><text x="12.5" y="16.3" font-family="Liberation Sans" font-size="10" font-weight="bold" fill="#fff" text-anchor="middle">zm</text></svg>
<svg class="a" style="left:1200px;top:1044px" width="25" height="25" viewBox="0 0 25 25"><rect x="0.5" y="0.5" width="24" height="24" rx="2" fill="#f7941d"/><path d="M4 8 V4 H8 M17 4 H21 V8 M21 17 V21 H17 M8 21 H4 V17" stroke="#fff" stroke-width="1.6" fill="none"/><circle cx="12.5" cy="12.5" r="4" fill="#fff"/></svg>
<svg class="a" style="left:1236px;top:1044px" width="25" height="25" viewBox="0 0 26 26"><path d="M13 13 L2.2 6.8 A12.5 12.5 0 0 1 23.8 6.8 Z" fill="#db4437"/><path d="M13 13 L23.8 6.8 A12.5 12.5 0 0 1 13 25.5 Z" fill="#f4c20d"/><path d="M13 13 L13 25.5 A12.5 12.5 0 0 1 2.2 6.8 Z" fill="#0f9d58"/><circle cx="13" cy="13" r="5.6" fill="#fff"/><circle cx="13" cy="13" r="4.4" fill="#4285f4"/></svg>
<svg class="a" style="left:1272px;top:1044px" width="25" height="25" viewBox="0 0 25 25"><circle cx="12.5" cy="12.5" r="12" fill="#f26a21"/><path d="M5 19 Q10 8 13 6 Q12 12 19 18 Q13 15 11 12 Q9 15 5 19 Z" fill="#fff"/></svg>
<svg class="a" style="left:1307px;top:1047px" width="26" height="18" viewBox="0 0 26 18"><rect x="1" y="2" width="21" height="13" rx="1.5" stroke="#eee" stroke-width="1.5" fill="none"/><rect x="3.5" y="4.5" width="12" height="8" fill="#eee"/><rect x="22.5" y="6" width="2.5" height="5" fill="#eee"/></svg>
<svg class="a" style="left:1347px;top:1043px" width="17" height="27" viewBox="0 0 17 27"><rect x="4" y="1" width="9" height="16" rx="3" fill="#f0f0f0"/><path d="M1.5 13 Q1.5 21 8.5 21 Q15.5 21 15.5 13" stroke="#f0f0f0" stroke-width="1.5" fill="none"/><path d="M8.5 21 V25.5 M5 25.5 H12" stroke="#f0f0f0" stroke-width="1.5"/></svg>
<svg class="a" style="left:1381px;top:1043px" width="24" height="26" viewBox="0 0 24 26"><path d="M2 25 Q6 14 12 8 Q17 3 23 1 Q21 9 15 15 Q9 20 2 25 Z" fill="#a98ed6"/><path d="M3 24 L16 10" stroke="#6c4fa8" stroke-width="1"/></svg>
<svg class="a" style="left:1415px;top:1043px" width="27" height="27" viewBox="0 0 25 26"><path d="M12.5 1.5 Q23.5 1.5 23.5 11.5 Q23.5 20 14 21 L9 25 L9 20.5 Q1.5 19 1.5 11.5 Q1.5 1.5 12.5 1.5 Z" fill="#7b519d" stroke="#e8dcf4" stroke-width="1.4"/><path d="M8 7 Q7.5 10 10 13.5 Q13 16.8 16 16.5 Q17.5 16 17 14.8 L15 13.4 L13.6 14.3 Q11.5 13 10.5 11 L11.4 9.6 L10 7.5 Q9 6.5 8 7 Z" fill="#fff"/><circle cx="20" cy="4.5" r="4" fill="#e81c2e"/></svg>
<svg class="a" style="left:1451px;top:1044px" width="24" height="24" viewBox="0 0 24 24"><rect x="0" y="0" width="24" height="24" fill="#14191c"/><path d="M4 12 Q10 5 20 12 Q10 19 4 12 Z" stroke="#76b900" stroke-width="1.8" fill="none"/><circle cx="12" cy="12" r="2.6" fill="#76b900"/></svg>
<svg class="a" style="left:1488px;top:1043px" width="25" height="27" viewBox="0 0 25 27"><path d="M11 1 L21 4.5 L21 12 Q21 20 11 25 Q1 20 1 12 L1 4.5 Z" fill="#fff"/><path d="M11 1 L11 13 L1 13 L1 4.5 Z" fill="#111"/><path d="M11 13 L21 13 Q21 20 11 25 Z" fill="#111"/><circle cx="19" cy="20" r="5.5" fill="#2fa84f"/><path d="M16.5 20 L18.3 21.8 L21.5 18.5" stroke="#fff" stroke-width="1.4" fill="none"/></svg>
<svg class="a" style="left:1527px;top:1045px" width="22" height="21" viewBox="0 0 22 21"><path d="M1.5 19 Q3 8 14 5.5 M5.5 20 Q7 12 14 10 M9.5 20.5 Q11 15 15 14.5" stroke="#e6e6e6" stroke-width="1.3" fill="none"/><circle cx="17" cy="18.5" r="1.6" fill="#e6e6e6"/></svg>
<svg class="a" style="left:1560px;top:1043px" width="25" height="26" viewBox="0 0 25 26"><rect x="0.5" y="0.5" width="24" height="25" rx="2" fill="#1e8fd6"/><rect x="3" y="3" width="19" height="17" fill="#a8dcf8"/><rect x="7" y="6" width="10" height="8" stroke="#1b5ea8" stroke-width="1.2" fill="none"/><rect x="12" y="17" width="10" height="6" fill="#0a4aa0"/></svg>
<svg class="a" style="left:1597px;top:1045px" width="23" height="22" viewBox="0 0 23 22"><path d="M1 8 H5 L10 3 V19 L5 14 H1 Z" stroke="#e6e6e6" stroke-width="1.3" fill="none"/><path d="M13 8 Q15 11 13 14 M16 5.5 Q19.5 11 16 16.5 M19 3 Q24 11 19 19" stroke="#e6e6e6" stroke-width="1.2" fill="none"/></svg>
<svg class="a" style="left:1634px;top:1043px" width="20" height="27" viewBox="0 0 20 27"><ellipse cx="10" cy="13.5" rx="9.5" ry="13" fill="#1e88e5"/><path d="M5.5 8.5 L14 17 L10 21 V6 L14 10 L5.5 18.5" stroke="#fff" stroke-width="1.5" fill="none"/></svg>
<svg class="a" style="left:1671px;top:1045px" width="21" height="23" viewBox="0 0 21 23"><path d="M4 5 Q4 2 7 2 L10 2 Q13 2 13 5 M1.5 8 H14 V18 H1.5 Z M14 11 L19.5 8 V18 L14 15" stroke="#e6e6e6" stroke-width="1.3" fill="none"/><path d="M4 21 Q8 19 12 21" stroke="#e6e6e6" stroke-width="1.2" fill="none"/></svg>
<div class="a" style="left:1709px;top:1046.5px;font-size:17.5px;line-height:20px;color:#f2f2f2">УКР</div>
<div class="a" style="left:1762px;top:1046.5px;font-size:17.8px;line-height:20px;color:#f2f2f2">10:20:56</div>
<svg class="a" style="left:1856px;top:1043px" width="28" height="27" viewBox="0 0 28 27"><path d="M2 1.5 H26 V20 H19 L14 25 L9 20 H2 Z" stroke="#f0f0f0" stroke-width="1.5" fill="none" stroke-linejoin="round"/></svg>
<div class="a" style="left:1913px;top:1032px;width:1.5px;height:46px;background:#8a9aa4"></div>
<!-- /TASKBAR -->

<!-- GALLERY -->
<div class="a big" style="left:1052px;top:195.8px;line-height:30px">Марія Грень</div>
<div class="a tag" style="left:1057px;top:253.1px"><svg class="a" style="left:3px;top:4.5px" width="24" height="22" viewBox="0 -1 24 22"><path d="M6.8 4.8 Q6.8 0.8 11.3 0.8 Q15.8 0.8 15.8 4.8 L15.8 12 Q15.8 16 11.3 16 Q6.8 16 6.8 12 Z" fill="#ee6668"/><rect x="10.4" y="15.5" width="1.8" height="2.5" fill="#ee6668"/><rect x="8" y="17.6" width="6.6" height="1.8" fill="#ee6668"/><path d="M0.6 19.6 L21 -0.8" stroke="#2a1517" stroke-width="3.6"/><path d="M1 19.2 L20.6 -0.4" stroke="#e67c84" stroke-width="1.8"/></svg>Марія Грень</div>
<div class="a big" style="left:1316px;top:195.8px;line-height:30px">Бурцева Дарина</div>
<div class="a tag" style="left:1320px;top:253.1px"><svg class="a" style="left:3px;top:4.5px" width="24" height="22" viewBox="0 -1 24 22"><path d="M6.8 4.8 Q6.8 0.8 11.3 0.8 Q15.8 0.8 15.8 4.8 L15.8 12 Q15.8 16 11.3 16 Q6.8 16 6.8 12 Z" fill="#ee6668"/><rect x="10.4" y="15.5" width="1.8" height="2.5" fill="#ee6668"/><rect x="8" y="17.6" width="6.6" height="1.8" fill="#ee6668"/><path d="M0.6 19.6 L21 -0.8" stroke="#2a1517" stroke-width="3.6"/><path d="M1 19.2 L20.6 -0.4" stroke="#e67c84" stroke-width="1.8"/></svg>Бурцева Дарина</div>
<div class="a big" style="left:1580px;top:195.8px;line-height:30px;font-size:27.7px">Raksha Karina</div>
<div class="a tag" style="left:1584px;top:253.1px"><svg class="a" style="left:3px;top:4.5px" width="24" height="22" viewBox="0 -1 24 22"><path d="M6.8 4.8 Q6.8 0.8 11.3 0.8 Q15.8 0.8 15.8 4.8 L15.8 12 Q15.8 16 11.3 16 Q6.8 16 6.8 12 Z" fill="#ee6668"/><rect x="10.4" y="15.5" width="1.8" height="2.5" fill="#ee6668"/><rect x="8" y="17.6" width="6.6" height="1.8" fill="#ee6668"/><path d="M0.6 19.6 L21 -0.8" stroke="#2a1517" stroke-width="3.6"/><path d="M1 19.2 L20.6 -0.4" stroke="#e67c84" stroke-width="1.8"/></svg>Raksha Karina</div>
<div class="a av av-flag" style="left:1126px;top:300.9px"><svg width="118" height="118" viewBox="0 0 118 118"><defs><linearGradient id="fb" x1="0" y1="0" x2="1" y2="1"><stop offset="0" stop-color="#2f6fd6"/><stop offset="1" stop-color="#1d4fb8"/></linearGradient><linearGradient id="fy" x1="0" y1="0" x2="1" y2="1"><stop offset="0" stop-color="#f3d23a"/><stop offset="1" stop-color="#e2b820"/></linearGradient></defs><rect width="118" height="118" fill="url(#fb)"/><path d="M0 58 Q30 54 59 58 Q90 62 118 57 L118 118 L0 118 Z" fill="url(#fy)"/><path d="M27 12 H88 V74 Q88 92 57.5 104 Q27 92 27 74 Z" fill="#1b3f80" opacity="0.6"/><path d="M29 14 H86 V74 Q86 90 57.5 101 Q29 90 29 74 Z" fill="#2058c4" stroke="#e8c430" stroke-width="2"/><g stroke="#f2cc2e" stroke-width="2.6" fill="none" stroke-linejoin="round"><path d="M57.5 22 Q54 30 55 50 L55 78 M57.5 22 Q61 30 60 50 L60 78"/><path d="M40 34 Q37 55 42 70 Q47 78 55 78 M40 34 Q46 50 46 66"/><path d="M75 34 Q78 55 73 70 Q68 78 60 78 M75 34 Q69 50 69 66"/><path d="M38 78 H77 M57.5 78 Q50 86 57.5 93 Q65 86 57.5 78"/><path d="M46 66 Q52 70 55 62 M69 66 Q63 70 60 62"/></g></svg></div>
<div class="a tag" style="left:1057px;top:401.7px"><svg class="a" style="left:3px;top:4.5px" width="24" height="22" viewBox="0 -1 24 22"><path d="M6.8 4.8 Q6.8 0.8 11.3 0.8 Q15.8 0.8 15.8 4.8 L15.8 12 Q15.8 16 11.3 16 Q6.8 16 6.8 12 Z" fill="#ee6668"/><rect x="10.4" y="15.5" width="1.8" height="2.5" fill="#ee6668"/><rect x="8" y="17.6" width="6.6" height="1.8" fill="#ee6668"/><path d="M0.6 19.6 L21 -0.8" stroke="#2a1517" stroke-width="3.6"/><path d="M1 19.2 L20.6 -0.4" stroke="#e67c84" stroke-width="1.8"/></svg>Анатолій Швед</div>
<div class="a big" style="left:1316px;top:344.4px;line-height:30px">Назар Гук</div>
<div class="a tag" style="left:1320px;top:401.7px"><svg class="a" style="left:3px;top:4.5px" width="24" height="22" viewBox="0 -1 24 22"><path d="M6.8 4.8 Q6.8 0.8 11.3 0.8 Q15.8 0.8 15.8 4.8 L15.8 12 Q15.8 16 11.3 16 Q6.8 16 6.8 12 Z" fill="#ee6668"/><rect x="10.4" y="15.5" width="1.8" height="2.5" fill="#ee6668"/><rect x="8" y="17.6" width="6.6" height="1.8" fill="#ee6668"/><path d="M0.6 19.6 L21 -0.8" stroke="#2a1517" stroke-width="3.6"/><path d="M1 19.2 L20.6 -0.4" stroke="#e67c84" stroke-width="1.8"/></svg>Назар Гук</div>
<div class="a big" style="left:1580px;top:344.4px;line-height:30px;font-size:29.6px">Тетяна Мокієнко</div>
<div class="a tag" style="left:1584px;top:401.7px"><svg class="a" style="left:3px;top:4.5px" width="24" height="22" viewBox="0 -1 24 22"><path d="M6.8 4.8 Q6.8 0.8 11.3 0.8 Q15.8 0.8 15.8 4.8 L15.8 12 Q15.8 16 11.3 16 Q6.8 16 6.8 12 Z" fill="#ee6668"/><rect x="10.4" y="15.5" width="1.8" height="2.5" fill="#ee6668"/><rect x="8" y="17.6" width="6.6" height="1.8" fill="#ee6668"/><path d="M0.6 19.6 L21 -0.8" stroke="#2a1517" stroke-width="3.6"/><path d="M1 19.2 L20.6 -0.4" stroke="#e67c84" stroke-width="1.8"/></svg>Тетяна Мокієнко</div>
<div class="a big" style="left:1052px;top:493.0px;line-height:30px">Світлана&nbsp; Тютю...</div>
<div class="a tag" style="left:1057px;top:550.3px"><svg class="a" style="left:3px;top:4.5px" width="24" height="22" viewBox="0 -1 24 22"><path d="M6.8 4.8 Q6.8 0.8 11.3 0.8 Q15.8 0.8 15.8 4.8 L15.8 12 Q15.8 16 11.3 16 Q6.8 16 6.8 12 Z" fill="#ee6668"/><rect x="10.4" y="15.5" width="1.8" height="2.5" fill="#ee6668"/><rect x="8" y="17.6" width="6.6" height="1.8" fill="#ee6668"/><path d="M0.6 19.6 L21 -0.8" stroke="#2a1517" stroke-width="3.6"/><path d="M1 19.2 L20.6 -0.4" stroke="#e67c84" stroke-width="1.8"/></svg>Світлана Тютюнник</div>
<div class="a big" style="left:1316px;top:493.0px;line-height:30px;font-size:29.4px">Vitalina Yundak</div>
<div class="a tag" style="left:1320px;top:550.3px"><svg class="a" style="left:3px;top:4.5px" width="24" height="22" viewBox="0 -1 24 22"><path d="M6.8 4.8 Q6.8 0.8 11.3 0.8 Q15.8 0.8 15.8 4.8 L15.8 12 Q15.8 16 11.3 16 Q6.8 16 6.8 12 Z" fill="#ee6668"/><rect x="10.4" y="15.5" width="1.8" height="2.5" fill="#ee6668"/><rect x="8" y="17.6" width="6.6" height="1.8" fill="#ee6668"/><path d="M0.6 19.6 L21 -0.8" stroke="#2a1517" stroke-width="3.6"/><path d="M1 19.2 L20.6 -0.4" stroke="#e67c84" stroke-width="1.8"/></svg>Vitalina Yundak</div>
<div class="a big" style="left:1580px;top:493.0px;line-height:30px">Гоневич&nbsp; Влад...</div>
<div class="a tag" style="left:1584px;top:550.3px"><svg class="a" style="left:3px;top:4.5px" width="24" height="22" viewBox="0 -1 24 22"><path d="M6.8 4.8 Q6.8 0.8 11.3 0.8 Q15.8 0.8 15.8 4.8 L15.8 12 Q15.8 16 11.3 16 Q6.8 16 6.8 12 Z" fill="#ee6668"/><rect x="10.4" y="15.5" width="1.8" height="2.5" fill="#ee6668"/><rect x="8" y="17.6" width="6.6" height="1.8" fill="#ee6668"/><path d="M0.6 19.6 L21 -0.8" stroke="#2a1517" stroke-width="3.6"/><path d="M1 19.2 L20.6 -0.4" stroke="#e67c84" stroke-width="1.8"/></svg>Гоневич Влад ОП-11</div>
<div class="a av av-p1" style="left:1126px;top:598.1px"><svg width="118" height="118" viewBox="0 0 118 118"><defs><filter id="b1" x="-20%" y="-20%" width="140%" height="140%"><feGaussianBlur stdDeviation="2.6"/></filter></defs><rect width="118" height="118" fill="#8e8e8e"/><g filter="url(#b1)"><rect x="-10" y="-10" width="70" height="35" fill="#a4a4a4"/><rect x="75" y="-10" width="50" height="60" fill="#9c9c9c"/><ellipse cx="36" cy="55" rx="36" ry="34" fill="#a2a2a2"/><path d="M44 -5 L70 -5 Q80 20 80 45 Q80 62 72 68 Q64 62 66 42 Q64 20 44 -5 Z" fill="#474747"/><ellipse cx="71" cy="62" rx="6" ry="9" fill="#1e1e1e"/><path d="M28 26 Q42 20 56 30" stroke="#5e5e5e" stroke-width="5" fill="none"/><ellipse cx="45" cy="36" rx="7" ry="3.5" fill="#3e3e3e"/><ellipse cx="8" cy="42" rx="6" ry="3" fill="#5a5a5a"/><path d="M5 40 Q40 48 70 52" stroke="#6a6a6a" stroke-width="2" fill="none"/><ellipse cx="28" cy="60" rx="6" ry="4" fill="#787878"/><path d="M20 76 Q36 72 50 76" stroke="#5a5a5a" stroke-width="3" fill="none"/><path d="M-10 84 Q30 90 55 76 Q85 66 118 72 L130 130 L-10 130 Z" fill="#bcbcbc"/><ellipse cx="108" cy="68" rx="10" ry="9" fill="#7e7e7e"/><path d="M80 45 Q95 40 118 50" stroke="#b0b0b0" stroke-width="6" fill="none"/></g></svg></div>
<div class="a tag" style="left:1057px;top:698.9px"><svg class="a" style="left:3px;top:4.5px" width="24" height="22" viewBox="0 -1 24 22"><path d="M6.8 4.8 Q6.8 0.8 11.3 0.8 Q15.8 0.8 15.8 4.8 L15.8 12 Q15.8 16 11.3 16 Q6.8 16 6.8 12 Z" fill="#ee6668"/><rect x="10.4" y="15.5" width="1.8" height="2.5" fill="#ee6668"/><rect x="8" y="17.6" width="6.6" height="1.8" fill="#ee6668"/><path d="M0.6 19.6 L21 -0.8" stroke="#2a1517" stroke-width="3.6"/><path d="M1 19.2 L20.6 -0.4" stroke="#e67c84" stroke-width="1.8"/></svg>Бондарчук Марина</div>
<div class="a av av-p2" style="left:1390px;top:598.1px"><svg width="118" height="118" viewBox="0 0 118 118"><defs><filter id="b2" x="-20%" y="-20%" width="140%" height="140%"><feGaussianBlur stdDeviation="1.5"/></filter><linearGradient id="wt" x1="0" y1="0" x2="0" y2="1"><stop offset="0" stop-color="#5878a6"/><stop offset="1" stop-color="#3a5a8c"/></linearGradient></defs><rect width="118" height="118" fill="#8a847e"/><g filter="url(#b2)"><rect x="-5" y="-5" width="130" height="16" fill="#b9cad9"/><rect x="-5" y="10" width="130" height="4" fill="#6e7e8c"/><path d="M-5 13 H110 L110 30 Q60 40 -5 66 Z" fill="url(#wt)"/><path d="M88 12 Q100 8 118 12 L118 26 L88 24 Z" fill="#66706a"/><path d="M-5 60 Q50 40 100 24 L102 31 Q50 48 -5 68 Z" fill="#28324a"/><path d="M18 66 Q55 50 100 31 L98 118 L20 118 Z" fill="#3e3c40"/><path d="M28 70 L30 118 M42 64 L44 118 M56 58 L57 118 M70 52 L70 118" stroke="#2c2a2e" stroke-width="3"/><path d="M-5 64 L20 64 L20 118 L-5 118 Z" fill="#c6c4c2"/><path d="M78 48 L118 36 L118 118 L66 118 Z" fill="#8c847e"/><rect x="100" y="20" width="5" height="50" fill="#c8c8c8"/><rect x="108" y="25" width="10" height="42" fill="#b4b4b4"/><ellipse cx="76" cy="16" rx="6" ry="9" fill="#6c5242"/><ellipse cx="77" cy="17" rx="3" ry="5" fill="#d9bba6"/><path d="M62 26 Q75 21 88 26 L86 47 L62 47 Z" fill="#ecebe6"/><path d="M73 24 L75 45" stroke="#5a4030" stroke-width="2.5"/><path d="M58 42 L86 42 L90 74 L56 74 Z" fill="#d5cfaa"/><rect x="54" y="40" width="9" height="16" fill="#e8e8e6"/><rect x="67" y="74" width="4" height="28" fill="#c4a690"/><rect x="73" y="74" width="4" height="28" fill="#b89a84"/></g></svg></div>
<div class="a tag" style="left:1320px;top:698.9px"><svg class="a" style="left:3px;top:4.5px" width="24" height="22" viewBox="0 -1 24 22"><path d="M6.8 4.8 Q6.8 0.8 11.3 0.8 Q15.8 0.8 15.8 4.8 L15.8 12 Q15.8 16 11.3 16 Q6.8 16 6.8 12 Z" fill="#ee6668"/><rect x="10.4" y="15.5" width="1.8" height="2.5" fill="#ee6668"/><rect x="8" y="17.6" width="6.6" height="1.8" fill="#ee6668"/><path d="M0.6 19.6 L21 -0.8" stroke="#2a1517" stroke-width="3.6"/><path d="M1 19.2 L20.6 -0.4" stroke="#e67c84" stroke-width="1.8"/></svg>Nadiia Kovalevska</div>
<div class="a av av-p3" style="left:1654px;top:598.1px"><svg width="118" height="118" viewBox="0 0 118 118"><defs><filter id="b3" x="-20%" y="-20%" width="140%" height="140%"><feGaussianBlur stdDeviation="2.2"/></filter></defs><rect width="118" height="118" fill="#8e9aa6"/><g filter="url(#b3)"><rect x="-5" y="-5" width="130" height="24" fill="#a8bccb"/><rect x="-5" y="18" width="130" height="6" fill="#7a8894"/><path d="M-5 20 L14 22 L18 40 L6 70 L-5 72 Z" fill="#e8ecf0"/><path d="M-5 55 Q20 50 35 58 L38 118 L-5 118 Z" fill="#e4e6ea"/><path d="M35 10 Q55 -2 78 8 Q86 40 80 70 L88 118 L30 118 L36 70 Q30 40 35 10 Z" fill="#262a34"/><ellipse cx="55" cy="36" rx="17" ry="24" fill="#c6aea2"/><ellipse cx="48" cy="30" rx="4" ry="2" fill="#5a5050"/><ellipse cx="64" cy="30" rx="4" ry="2" fill="#5a5050"/><path d="M72 60 Q100 55 118 75 L118 118 L70 118 Z" fill="#e2e2e4"/><path d="M40 70 L72 70 L68 118 L42 118 Z" fill="#1c2230"/></g></svg></div>
<div class="a tag" style="left:1584px;top:698.9px"><svg class="a" style="left:3px;top:4.5px" width="24" height="22" viewBox="0 -1 24 22"><path d="M6.8 4.8 Q6.8 0.8 11.3 0.8 Q15.8 0.8 15.8 4.8 L15.8 12 Q15.8 16 11.3 16 Q6.8 16 6.8 12 Z" fill="#ee6668"/><rect x="10.4" y="15.5" width="1.8" height="2.5" fill="#ee6668"/><rect x="8" y="17.6" width="6.6" height="1.8" fill="#ee6668"/><path d="M0.6 19.6 L21 -0.8" stroke="#2a1517" stroke-width="3.6"/><path d="M1 19.2 L20.6 -0.4" stroke="#e67c84" stroke-width="1.8"/></svg>Аліна Маляр</div>
<div class="a av av-p4" style="left:1126px;top:746.7px"><svg width="118" height="118" viewBox="0 0 118 118"><defs><filter id="b4" x="-20%" y="-20%" width="140%" height="140%"><feGaussianBlur stdDeviation="1.8"/></filter></defs><rect width="118" height="118" fill="#c7b6a1"/><g filter="url(#b4)"><path d="M34 40 Q34 16 56 16 Q82 16 84 44 L86 86 L36 88 Z" fill="#1c1514"/><ellipse cx="53" cy="50" rx="14" ry="17" fill="#d9b3a2"/><rect x="36" y="24" width="44" height="16" fill="#1c1514"/><ellipse cx="47" cy="47" rx="3" ry="1.5" fill="#4a3030"/><ellipse cx="60" cy="47" rx="3" ry="1.5" fill="#4a3030"/><path d="M45 59 Q53 63 60 59" stroke="#a06a64" stroke-width="2" fill="none"/><path d="M24 118 Q30 82 50 76 Q80 70 104 94 L110 118 Z" fill="#1e1e26"/><path d="M40 80 L54 88 L60 76 L80 72" stroke="#e8e8ee" stroke-width="3" fill="none"/></g></svg></div>
<div class="a tag" style="left:1057px;top:847.5px"><svg class="a" style="left:3px;top:4.5px" width="24" height="22" viewBox="0 -1 24 22"><path d="M6.8 4.8 Q6.8 0.8 11.3 0.8 Q15.8 0.8 15.8 4.8 L15.8 12 Q15.8 16 11.3 16 Q6.8 16 6.8 12 Z" fill="#ee6668"/><rect x="10.4" y="15.5" width="1.8" height="2.5" fill="#ee6668"/><rect x="8" y="17.6" width="6.6" height="1.8" fill="#ee6668"/><path d="M0.6 19.6 L21 -0.8" stroke="#2a1517" stroke-width="3.6"/><path d="M1 19.2 L20.6 -0.4" stroke="#e67c84" stroke-width="1.8"/></svg>Tetiana Naumova</div>
<div class="a big" style="left:1319px;top:790.2px;line-height:30px;font-size:29.3px">Alina</div>
<div class="a tag" style="left:1320px;top:847.5px"><svg class="a" style="left:3px;top:4.5px" width="24" height="22" viewBox="0 -1 24 22"><path d="M6.8 4.8 Q6.8 0.8 11.3 0.8 Q15.8 0.8 15.8 4.8 L15.8 12 Q15.8 16 11.3 16 Q6.8 16 6.8 12 Z" fill="#ee6668"/><rect x="10.4" y="15.5" width="1.8" height="2.5" fill="#ee6668"/><rect x="8" y="17.6" width="6.6" height="1.8" fill="#ee6668"/><path d="M0.6 19.6 L21 -0.8" stroke="#2a1517" stroke-width="3.6"/><path d="M1 19.2 L20.6 -0.4" stroke="#e67c84" stroke-width="1.8"/></svg>&nbsp;Alina</div>
<div class="a big" style="left:1580px;top:790.2px;line-height:30px;font-size:29.5px">iPhone</div>
<div class="a tag" style="left:1584px;top:847.5px"><svg class="a" style="left:3px;top:4.5px" width="24" height="22" viewBox="0 -1 24 22"><path d="M6.8 4.8 Q6.8 0.8 11.3 0.8 Q15.8 0.8 15.8 4.8 L15.8 12 Q15.8 16 11.3 16 Q6.8 16 6.8 12 Z" fill="#ee6668"/><rect x="10.4" y="15.5" width="1.8" height="2.5" fill="#ee6668"/><rect x="8" y="17.6" width="6.6" height="1.8" fill="#ee6668"/><path d="M0.6 19.6 L21 -0.8" stroke="#2a1517" stroke-width="3.6"/><path d="M1 19.2 L20.6 -0.4" stroke="#e67c84" stroke-width="1.8"/></svg>iPhone</div>
<!-- /GALLERY -->
</body></html>
